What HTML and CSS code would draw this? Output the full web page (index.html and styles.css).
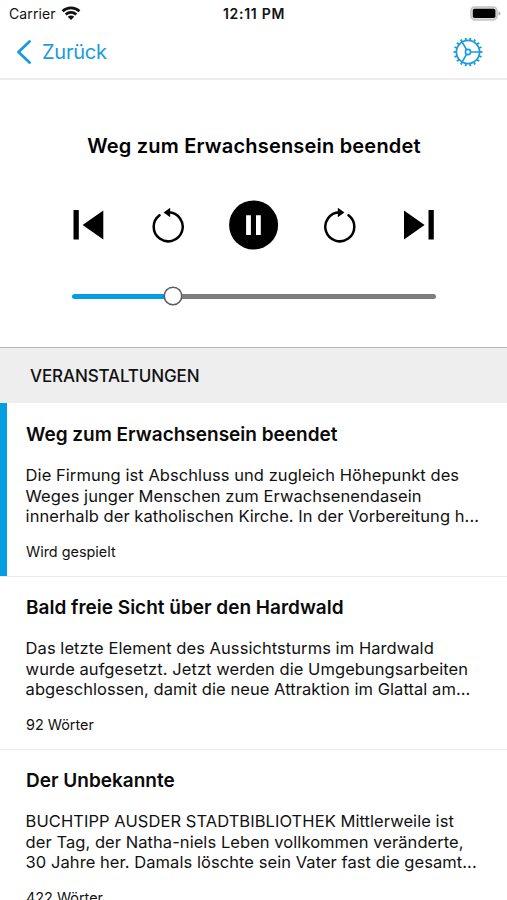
FILE: index.html
```html
<!DOCTYPE html>
<html lang="de">
<head>
<meta charset="utf-8">
<meta name="viewport" content="width=device-width, initial-scale=1">
<title>Veranstaltungen</title>
<link rel="stylesheet" href="styles.css">
</head>
<body>
<div class="status">
  <div class="carrier"><span>Carrier</span>
    <svg width="20" height="15" viewBox="0 0 20 15"><g fill="none" stroke="#111" stroke-width="2.7"><path d="M1.6 5.2C6.3.7 13.7.7 18.4 5.2"/><path d="M4.7 8.5C7.7 5.7 12.3 5.7 15.3 8.5"/></g><path d="M6.8 10.8C8.7 9.1 11.3 9.1 13.2 10.8L10 14z" fill="#111"/></svg>
  </div>
  <span class="clock">12:11 PM</span>
  <svg class="battery" width="31" height="15" viewBox="0 0 31 15"><rect x=".9" y=".9" width="26.2" height="13" rx="3.8" fill="#ddd" stroke="#c4c4c4" stroke-width="1.5"/><rect x="2.8" y="2.8" width="22.6" height="9.2" rx="1.8" fill="#000"/><path d="M28.5 5.2Q30.5 6 30.5 7.4T28.5 9.6z" fill="#aaa"/></svg>
</div>
<nav class="nav">
  <a class="back"><svg width="16" height="24" viewBox="0 0 16 24"><path d="M13.5 1.5 2.5 12 13.5 22.5" fill="none" stroke="#1a9bdc" stroke-width="2.8" stroke-linecap="round" stroke-linejoin="round"/></svg><span>Zurück</span></a>
  <svg class="gear" width="30" height="30" viewBox="-15 -15 30 30" fill="none" stroke="#1a9bdc"><circle r="13" stroke-width="2.8" pathLength="180" stroke-dasharray="4 6" stroke-dashoffset="2"/><circle r="11.6" stroke-width="1.7"/><circle r="2.6" stroke-width="1.6"/><path d="M2.8 0H11M-1.5-2.4-5.7-9.7M-1.5 2.4-5.7 9.7" stroke-width="1.7"/></svg>
</nav>
<section class="player">
  <h1>Weg zum Erwachsensein beendet</h1>
  <div class="controls">
    <svg width="32" height="32" viewBox="0 0 32 32"><path d="M1.5 1H6.8V30.6H1.5zM10.6 16 31.3 1.5V30.6z"/></svg>
    <svg class="rewind" width="34" height="36" viewBox="0 0 34 36"><path d="M8.5 8.2A14.5 14.5 0 1 0 17.5 5.3" fill="none" stroke="#000" stroke-width="2.5" stroke-linecap="round"/><path d="M12.6 5.5 19.2.7V10.3z"/></svg>
    <svg class="pause" width="50" height="50" viewBox="0 0 50 50"><circle cx="24.6" cy="25" r="24.5"/><path d="M17.1 15.2H21.9V35H17.1zM27 15.2H31.8V35H27z" fill="#fff"/></svg>
    <svg class="forward" width="34" height="36" viewBox="0 0 34 36"><path d="M25.5 8.2A14.5 14.5 0 1 1 16.5 5.3" fill="none" stroke="#000" stroke-width="2.5" stroke-linecap="round"/><path d="M21.4 5.5 14.8.7V10.3z"/></svg>
    <svg width="32" height="32" viewBox="0 0 32 32"><path d="M25.5 1H30.8V30.6H25.5zM21.6 16 1 1.5V30.6z"/></svg>
  </div>
  <div class="slider"><div class="played"></div><div class="knob"></div><div class="rest"></div></div>
</section>
<h2 class="heading"><span>VERANSTALTUNGEN</span></h2>
<main>
  <article class="item active">
    <h3><span>Weg zum Erwachsensein beendet</span></h3>
    <p><span>Die Firmung ist Abschluss und zugleich Höhepunkt des</span><br><span>Weges junger Menschen zum Erwachsenendasein</span><br><span>innerhalb der katholischen Kirche. In der Vorbereitung h...</span></p>
    <small>Wird gespielt</small>
  </article>
  <article class="item">
    <h3><span>Bald freie Sicht über den Hardwald</span></h3>
    <p><span>Das letzte Element des Aussichtsturms im Hardwald</span><br><span>wurde aufgesetzt. Jetzt werden die Umgebungsarbeiten</span><br><span>abgeschlossen, damit die neue Attraktion im Glattal am...</span></p>
    <small>92 Wörter</small>
  </article>
  <article class="item">
    <h3><span>Der Unbekannte</span></h3>
    <p><span>BUCHTIPP AUSDER STADTBIBLIOTHEK Mittlerweile ist</span><br><span>der Tag, der Natha-niels Leben vollkommen veränderte,</span><br><span>30 Jahre her. Damals löschte sein Vater fast die gesamt...</span></p>
    <small>422 Wörter</small>
  </article>
</main>
</body>
</html>
```
FILE: styles.css
```css
* { box-sizing: border-box; }
body { margin: 0; height: 900px; overflow: hidden; background: #fff; color: #111; font-family: Inter, "Liberation Sans", sans-serif; }
svg { display: block; flex: none; }
.status { height: 28px; display: grid; grid-template-columns: 1fr auto 1fr; align-items: center; padding: 0 6px 0 9px; }
.carrier { display: flex; align-items: center; gap: 5px; font-size: 14px; letter-spacing: .12px; line-height: 20px; }
.carrier svg { margin-top: -2px; }
.clock { font-size: 14px; font-weight: 600; letter-spacing: .7px; line-height: 20px; margin-left: -2px; }
.battery { justify-self: end; margin-top: -2px; }
.nav { height: 52px; border-bottom: 2px solid #ededed; display: flex; justify-content: space-between; align-items: center; padding: 0 24px 2px 16px; }
.back { display: flex; align-items: center; gap: 10px; color: #1a9bdc; font-size: 20px; letter-spacing: -.25px; line-height: 24px; }
.player { height: 267px; padding-top: 52px; }
h1 { margin: 0 0 0 1px; text-align: center; font-size: 20px; letter-spacing: .2px; line-height: 28px; font-weight: 600; color: #000; }
.controls { height: 50px; margin: 40px 72px 0; display: flex; align-items: center; justify-content: space-between; }
.rewind { margin: 0 -2px 1px 2px; }
.forward { margin: 0 1px 1px -1px; }
.slider { display: flex; align-items: center; height: 20px; margin: 36px 71px 0 72px; }
.played { width: 92px; height: 5px; border-radius: 3px 0 0 3px; background: #079de2; }
.knob { width: 18px; height: 18px; border: 1.5px solid #555; border-radius: 50%; background: #fff; box-shadow: 0 0 0 .5px #555; }
.rest { flex: 1; height: 5px; border-radius: 0 3px 3px 0; background: #7d7d7d; }
.heading { margin: 0; height: 56px; padding: 17px 30px 0; border-top: 1px solid #b5b5b5; background: #eee; font-size: 17px; letter-spacing: -.12px; line-height: 22px; font-weight: 500; }
.item { height: 173px; padding: 20px 26px 0; }
.item + .item { border-top: 1px solid #ebebeb; padding-top: 19px; }
.active { box-shadow: inset 7px 0 #049fe3; }
h3 { margin: 0; font-size: 19px; line-height: 24px; font-weight: 600; color: #0a0a0a; }
p { margin: 18px 0 0 -.4px; font-size: 16.5px; letter-spacing: .06px; line-height: 20.5px; white-space: nowrap; }
small { display: block; margin-top: 16px; font-size: 14.4px; line-height: 18px; }
```
